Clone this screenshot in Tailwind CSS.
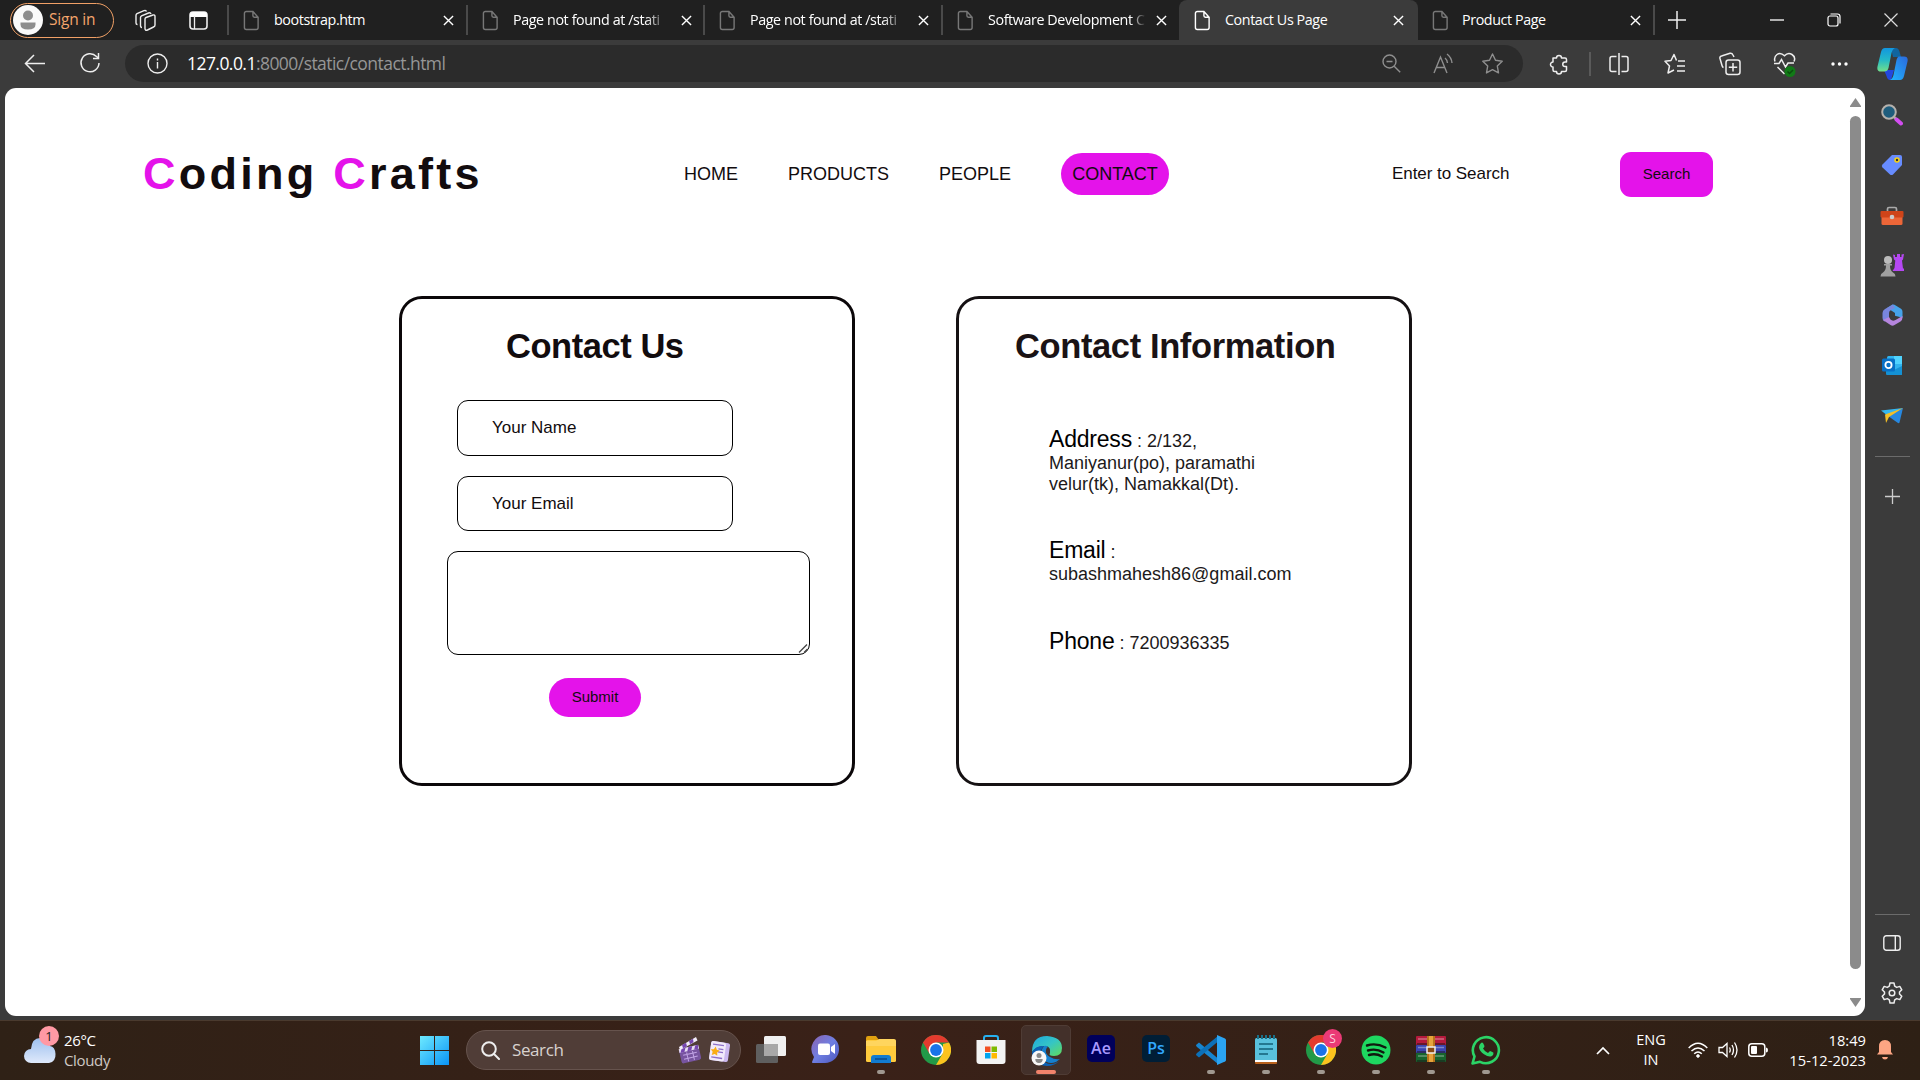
<!DOCTYPE html>
<html lang="en">
<head>
<meta charset="utf-8">
<title>Contact Us Page</title>
<script src="https://cdn.jsdelivr.net/npm/@tailwindcss/browser@4"></script>
</head>
<body class="w-[1920px] h-[1080px] overflow-hidden bg-[#3b3b3b] font-['Open_Sans',sans-serif] text-white flex flex-col">
<svg class="hidden">
  <symbol id="doc" viewBox="0 0 18 22"><path d="M3.5 1.5h7l5.5 6v11a2 2 0 0 1-2 2H3.500a2 2 0 0 1-2-2v-15a2 2 0 0 1 2-2zM10.500 1.500v4.500a1.500 1.500 0 0 0 1.500 1.500h4" fill="none" stroke="currentColor" stroke-width="1.500"/></symbol>
  <symbol id="x" viewBox="0 0 12 12"><path d="M1 1l10 10M11 1L1 11" stroke="currentColor" stroke-width="1.500" fill="none"/></symbol>
  <symbol id="chrome" viewBox="0 0 30 30"><circle cx="15" cy="15" r="15" fill="#229a48"/><path d="M28 7.500A15 15 0 0 1 15 30l6.500-11.200L22 9z" fill="#fcc31e"/><path d="M15 7.500h13A15 15 0 0 0 2 7.500l6.500 11.300z" fill="#e33b2e"/><circle cx="15" cy="15" r="7.500" fill="#fff"/><circle cx="15" cy="15" r="5.900" fill="#1a73e8"/></symbol>
</svg>

<!-- tab strip -->
<header class="h-10 shrink-0 bg-[#202020] flex items-center text-[14.300px] tracking-[-0.4px]">
  <div class="ml-[10px] w-[104px] h-[35px] rounded-full border-[1.5px] border-[#f0a066] flex items-center text-[#f4a56c] shrink-0">
    <svg class="ml-[2px] size-[30px]" viewBox="0 0 30 30"><circle cx="15" cy="15" r="15" fill="#fafafa"/><circle cx="15" cy="10.500" r="5" fill="#8d8d8d"/><path d="M7.500 17.500h15v2q0 5-7.500 5t-7.500-5z" fill="#8d8d8d"/></svg>
    <span class="ml-[6px] text-[15.500px] tracking-[-0.2px] whitespace-nowrap">Sign in</span>
  </div>
  <svg class="ml-[20px] size-[23px] shrink-0" viewBox="0 0 23 23" fill="none" stroke="#eee" stroke-width="1.400"><path d="M12 8.500l7-2.500q2-.5 2 1.500v8.500q0 1.500-1.500 2l-6 3q-2.500.8-2.500-1.500V10q0-1 1-1.500z"/><path d="M8 18.500q-1.500 0-1.500-2V8.500q0-1.200 1-1.700l7-2.800q2-.6 2.500 1"/><path d="M3.500 15.500Q2 15.500 2 14V6.500Q2 5.300 3 4.700l7-3Q12 1 12.500 2.500"/></svg>
  <svg class="ml-[32px] size-[19px] shrink-0" viewBox="0 0 19 19"><rect x="1" y="1" width="17" height="17" rx="3" fill="none" stroke="#eee" stroke-width="1.600"/><path d="M1 6V4q0-3 3-3h11q3 0 3 3v2z" fill="#fff"/><path d="M5.500 5v13" stroke="#eee" stroke-width="1.300"/></svg>
  <div class="ml-[19px] w-[2px] h-[30px] bg-[#4a4a4a] shrink-0"></div>
  <div class="flex h-10 items-center">
    <div class="w-[239px] h-10 flex items-center pl-[14px] shrink-0">
      <svg class="w-[17px] h-[21px] text-[#777] shrink-0"><use href="#doc"/></svg><span class="ml-[14px] w-[158px] whitespace-nowrap shrink-0">bootstrap.htm</span><svg class="ml-[11px] size-[11px] shrink-0"><use href="#x"/></svg><div class="ml-auto w-[2px] h-[30px] bg-[#4a4a4a]"></div>
    </div>
    <div class="w-[237px] h-10 flex items-center pl-[14px] shrink-0">
      <svg class="w-[17px] h-[21px] text-[#777] shrink-0"><use href="#doc"/></svg><span class="ml-[14px] w-[156px] whitespace-nowrap shrink-0 mask-r-from-85%">Page not found at /stati</span><svg class="ml-[12px] size-[11px] shrink-0"><use href="#x"/></svg><div class="ml-auto w-[2px] h-[30px] bg-[#4a4a4a]"></div>
    </div>
    <div class="w-[238px] h-10 flex items-center pl-[14px] shrink-0">
      <svg class="w-[17px] h-[21px] text-[#777] shrink-0"><use href="#doc"/></svg><span class="ml-[14px] w-[156px] whitespace-nowrap shrink-0 mask-r-from-85%">Page not found at /stati</span><svg class="ml-[12px] size-[11px] shrink-0"><use href="#x"/></svg><div class="ml-auto w-[2px] h-[30px] bg-[#4a4a4a]"></div>
    </div>
    <div class="w-[236px] h-10 flex items-center pl-[14px] shrink-0">
      <svg class="w-[17px] h-[21px] text-[#777] shrink-0"><use href="#doc"/></svg><span class="ml-[14px] w-[158px] whitespace-nowrap shrink-0 mask-r-from-90%">Software Development C</span><svg class="ml-[10px] size-[11px] shrink-0"><use href="#x"/></svg>
    </div>
    <div class="w-[239px] h-10 flex items-center pl-[15px] shrink-0 bg-[#3b3b3b] rounded-t-lg">
      <svg class="w-[17px] h-[21px] text-white shrink-0"><use href="#doc"/></svg><span class="ml-[14px] w-[158px] whitespace-nowrap shrink-0">Contact Us Page</span><svg class="ml-[10px] size-[11px] shrink-0"><use href="#x"/></svg>
    </div>
    <div class="w-[237px] h-10 flex items-center pl-[14px] shrink-0">
      <svg class="w-[17px] h-[21px] text-[#777] shrink-0"><use href="#doc"/></svg><span class="ml-[13px] w-[158px] whitespace-nowrap shrink-0">Product Page</span><svg class="ml-[10px] size-[11px] shrink-0"><use href="#x"/></svg><div class="ml-auto w-[2px] h-[30px] bg-[#4a4a4a]"></div>
    </div>
  </div>
  <svg class="ml-[13px] size-[18px] shrink-0" viewBox="0 0 18 18"><path d="M9 0v18M0 9h18" stroke="#eee" stroke-width="1.500"/></svg>
  <div class="ml-auto pr-[22px] flex items-center gap-[43px] shrink-0">
    <svg class="size-[14px]" viewBox="0 0 14 14"><path d="M0 7h14" stroke="#fff" stroke-width="1.300"/></svg>
    <svg class="size-[14px]" viewBox="0 0 14 14" fill="none" stroke="#fff" stroke-width="1.200"><rect x="1" y="3" width="10" height="10" rx="2"/><path d="M3.500 1h7q2.500 0 2.500 2.500v7"/></svg>
    <svg class="size-[14px]" viewBox="0 0 14 14"><path d="M.5.5l13 13M13.500.5l-13 13" stroke="#ddd" stroke-width="1.200"/></svg>
  </div>
</header>

<!-- toolbar -->
<div class="h-12 shrink-0 flex items-center">
  <svg class="ml-[24px] mt-[-2px] w-[21px] h-[19px]" viewBox="0 0 21 19"><path d="M10 1L1.500 9.500 10 18M1.500 9.500H21" fill="none" stroke="#eee" stroke-width="1.500"/></svg>
  <svg class="ml-[34px] mt-[-2px] size-[22px]" viewBox="0 0 22 22" fill="none" stroke="#eee" stroke-width="1.500"><path d="M20 11a9 9 0 1 1-2.500-6.500L19.500 6M19.500 1v5.500h-5.500"/></svg>
  <div class="ml-[24px] mt-[-1px] w-[1398px] h-[37px] rounded-full bg-[#2b2b2b] flex items-center pl-[22px] pr-[20px]">
    <svg class="size-[21px]" viewBox="0 0 21 21" fill="none" stroke="#eee" stroke-width="1.400"><circle cx="10.500" cy="10.500" r="9.500"/><path d="M10.500 9v6.500M10.500 5.500v2"/></svg>
    <span class="ml-[19px] text-[17.500px] tracking-[-0.550px] text-[#969696] whitespace-nowrap"><span class="text-white">127.0.0.1</span>:8000/static/contact.html</span>
    <div class="ml-auto flex items-center text-[#8f8f8f]">
      <svg class="size-[19px]" viewBox="0 0 19 19" fill="none" stroke="currentColor" stroke-width="1.400"><circle cx="7.500" cy="7.500" r="6.500"/><path d="M4.500 7.500h6M12.200 12.200l6 6"/></svg>
      <svg class="ml-[32px] w-[20px] h-[21px]" viewBox="0 0 20 21" fill="none" stroke="currentColor" stroke-width="1.400"><path d="M1 20L7.500 4 14 20M3.500 14.500h8M12 5q2 1.500 2.500 5M14 1q4.500 3.500 5 9"/></svg>
      <svg class="ml-[29px] w-[21px] h-[21px]" viewBox="0 0 21 21" fill="none" stroke="currentColor" stroke-width="1.400" stroke-linejoin="round"><path d="M10.500 1l3 6.300 6.700 1-4.900 4.700 1.200 6.900-6-3.300-6 3.300 1.200-6.900L.8 8.300l6.700-1z"/></svg>
    </div>
  </div>
  <div class="flex items-center mt-[-1px] shrink-0">
    <svg class="ml-[25px] size-[22px]" viewBox="0 0 22 22" fill="none" stroke="#eee" stroke-width="1.500" stroke-linejoin="round"><path d="M5 5h3.500a2.500 2.500 0 1 1 5 0H17q1.500 0 1.500 1.500V9h-1.500a2.200 2.200 0 1 0 0 4.500h1.500v3.500q0 1.500-1.500 1.500h-3.500a2.500 2.500 0 1 1-5 0H6.500Q5 18.500 5 17v-3a2.500 2.500 0 1 1 0-5z"/></svg>
    <div class="ml-[19px] w-[2px] h-[24px] bg-[#5a5a5a]"></div>
    <svg class="ml-[18px] w-[20px] h-[22px]" viewBox="0 0 20 22" fill="none" stroke="#eee" stroke-width="1.500"><path d="M7.500 3.500H3q-2 0-2 2v11q0 2 2 2h4.500M12.500 3.500H17q2 0 2 2v11q0 2-2 2h-4.500M10 0v22"/></svg>
    <svg class="ml-[35px] w-[21px] h-[22px]" viewBox="0 0 21 22" fill="none" stroke="#eee" stroke-width="1.500" stroke-linejoin="round"><path d="M12.500 7.500L10 1.500 7 7.500l-6 .8 4.500 4.700-1.500 7 6-3M14 8h7M13 13h8M13 18h8"/></svg>
    <svg class="ml-[34px] w-[22px] h-[24px]" viewBox="0 0 22 24" fill="none" stroke="#eee" stroke-width="1.500"><rect x="7" y="8" width="14" height="14.500" rx="2.500"/><path d="M14 11v8.500M9.800 15.200h8.400M4.500 15.500q-1-.3-1.500-2L1 6.500Q.5 4.500 2.500 4L11 1.200Q13 .8 14 3l1 2"/></svg>
    <svg class="ml-[32px] mt-[2px] w-[23px] h-[26px]" viewBox="0 0 23 26" fill="none" stroke="#eee" stroke-width="1.500"><path d="M2 9.500Q.5 5 4 2.500t7.500 1.300Q15 0 19 2.500t2 7M1 11.500h5l2.500-4 4 7.500 2.500-4h6M4.500 15l7 7"/><circle cx="17" cy="19.500" r="5.500" fill="#117a17" stroke="none"/><path d="M14.500 19.500l2 2 3.500-3.500" stroke="#0a4d0e"/></svg>
    <svg class="ml-[35px] w-[17px] h-[4px]" viewBox="0 0 17 4" fill="#fff"><circle cx="2" cy="2" r="1.700"/><circle cx="8.500" cy="2" r="1.700"/><circle cx="15" cy="2" r="1.700"/></svg>
    <svg class="ml-[29px] w-[31px] h-[32px]" viewBox="0 0 31 32"><defs><linearGradient id="cp1" x1="0" y1="0" x2="0" y2="1"><stop offset="0" stop-color="#1296df"/><stop offset=".5" stop-color="#23b8c8"/><stop offset="1" stop-color="#72e08a"/></linearGradient><linearGradient id="cp2" x1="0" y1="1" x2="1" y2="0"><stop offset="0" stop-color="#20b7ff"/><stop offset="1" stop-color="#2b68dc"/></linearGradient></defs><path d="M14 0h5q2.500 0 3.500 3.500L24 9h-8z" fill="#10659f"/><path d="M7 22h10l-3 10h-1q-2.500 0-3.500-4z" fill="#2348df"/><path d="M8 0h10q-2.500 1-3.500 5l-3 15q-1 3.500-4 3.500H4q-4.500 0-3.500-5L4 4Q5 0 8 0z" fill="url(#cp1)"/><path d="M22 8.500h5q4.500 0 3.500 5L27 28q-1 4-4 4H13q2.500-1 3.500-5l3-15q1-3.500 2.500-3.500z" fill="url(#cp2)"/></svg>
  </div>
</div>

<div class="h-[932px] shrink-0 flex">
  <!-- page viewport -->
  <main class="ml-[5px] w-[1860px] h-[928px] rounded-[11px] bg-white flex font-['Liberation_Sans',Arial,sans-serif] text-[#120c0e]">
    <div class="w-[1845px] shrink-0">
      <nav class="mt-[61px] h-[50px] flex items-center">
        <h1 class="ml-[138px] w-[541px] shrink-0 text-[45px] leading-[50px] font-bold tracking-[3.250px] whitespace-nowrap"><span class="text-[#e413ea]">C</span>oding <span class="text-[#e413ea]">C</span>rafts</h1>
        <div class="flex items-center text-[18px] shrink-0">
          <a class="w-[104px]">HOME</a><a class="w-[151px]">PRODUCTS</a><a class="w-[122px]">PEOPLE</a>
          <a class="w-[108px] h-[42px] rounded-[21px] bg-[#e413ea] flex items-center justify-center">CONTACT</a>
        </div>
        <span class="ml-[223px] w-[228px] shrink-0 text-[17px] tracking-[-0.050px]">Enter to Search</span>
        <button class="w-[93px] h-[45px] shrink-0 rounded-[11px] bg-[#e413ea] text-[15px]">Search</button>
      </nav>
      <div class="mt-[97px] ml-[394px] flex gap-[101px]">
        <form class="w-[456px] h-[490px] rounded-[23px] border-3 border-[#0b0709] flex flex-col items-start">
          <h2 class="mt-[27px] ml-[104px] text-[34.500px] leading-[40px] font-bold tracking-[-0.450px] whitespace-nowrap">Contact Us</h2>
          <div class="mt-[34px] ml-[55px] w-[276px] h-[56px] rounded-[11px] border border-black flex items-center pl-[34px] text-[17px]">Your Name</div>
          <div class="mt-[20px] ml-[55px] w-[276px] h-[55px] rounded-[11px] border border-black flex items-center pl-[34px] text-[17px]">Your Email</div>
          <div class="mt-[20px] ml-[45px] w-[363px] h-[104px] rounded-[11px] border border-black flex items-end justify-end">
            <svg class="size-[11px]" viewBox="0 0 11 11"><path d="M1 9.500L9 1.500M6 9.500L9.500 6" stroke="#444" stroke-width="1.300"/></svg>
          </div>
          <button class="mt-[23px] ml-[147px] w-[92px] h-[39px] rounded-full bg-[#e413ea] text-[15px]">Submit</button>
        </form>
        <section class="w-[456px] h-[490px] rounded-[23px] border-3 border-[#151113]">
          <h2 class="mt-[27px] ml-[56px] text-[34.500px] leading-[40px] font-bold tracking-[-0.380px] whitespace-nowrap text-[#1a1315]">Contact Information</h2>
          <div class="ml-[90px] mt-[59px] w-[250px] text-[18px] leading-[21px] text-[#1c191a]">
            <p class="whitespace-nowrap"><span class="text-[23px] leading-[28px] tracking-[-0.2px] text-black">Address</span> : 2/132,<br>Maniyanur(po), paramathi<br>velur(tk), Namakkal(Dt).</p>
            <p class="mt-[41px]"><span class="text-[23px] leading-[28px] tracking-[-0.2px] text-black">Email</span> :<br>subashmahesh86@gmail.com</p>
            <p class="mt-[42px]"><span class="text-[23px] leading-[28px] tracking-[-0.2px] text-black">Phone</span> : 7200936335</p>
          </div>
        </section>
      </div>
    </div>
    <div class="w-[11px] pt-[10px] flex flex-col items-center shrink-0">
      <svg class="w-[11px] h-[9px]" viewBox="0 0 11 9"><path d="M5.500 0L11 8v1H0V8z" fill="#8b8b8b"/></svg>
      <div class="mt-[9px] w-[11px] h-[853px] rounded-full bg-[#8b8b8b]"></div>
      <svg class="mt-[29px] w-[11px] h-[9px]" viewBox="0 0 11 9"><path d="M5.500 9L11 1V0H0v1z" fill="#8b8b8b"/></svg>
    </div>
  </main>

  <!-- sidebar -->
  <aside class="w-[54px] flex flex-col items-center">
    <svg class="mt-[16px] size-[22px]" viewBox="0 0 22 22"><path d="M13 13l3 3" stroke="#aaa" stroke-width="2.500"/><path d="M15.500 15.500l4.500 4" stroke="#d24df0" stroke-width="4" stroke-linecap="round"/><circle cx="8" cy="8" r="6.800" fill="#1f5d7d" stroke="#b5b1ad" stroke-width="2"/></svg>
    <svg class="mt-[28px] size-[22px]" viewBox="0 0 22 22"><path d="M11 1h8q2 0 2 2v8L12 20.500q-1.500 1-3 0l-7.500-7q-1.500-1.500 0-3z" fill="#678cff"/><circle cx="16" cy="6" r="2" fill="#333" stroke="#f7d116" stroke-width="1.600"/></svg>
    <svg class="mt-[30px] w-[24px] h-[20px]" viewBox="0 0 24 20"><path d="M7.500 5V3q0-1.500 1.500-1.500h6q1.500 0 1.500 1.500v2" fill="none" stroke="#aaa" stroke-width="1.700"/><rect x="1.500" y="8" width="21" height="11" rx="1.500" fill="#ec6638"/><rect x=".5" y="5" width="23" height="6.500" rx="1" fill="#cf4419"/><circle cx="12" cy="11" r="2.300" fill="#ccc"/></svg>
    <svg class="mt-[27px] w-[24px] h-[24px]" viewBox="0 0 24 24"><path d="M13 1.500l2 .5v2h2V1h3v3h1.500V1.500L24 1l-1 5.500-1 1 1 8H24v2.500H12.500L14.500 15l.8-7.500-1.300-1z" fill="#b548f2"/><circle cx="8" cy="7" r="4" fill="#bbb"/><path d="M4 11h8v1.500h-2q0 5 3 7 2.500 1 2.500 4H.5q0-3 2.500-4 3-2 3-7H4z" fill="#a0a0a0"/></svg>
    <svg class="mt-[27px] size-[23px]" viewBox="0 0 23 23"><path d="M11.500.5q1-.3 2 .3l6.500 4q1.500 1 1.500 3v6l-7.500-2L14 9l-3-2-5-3z" fill="#46a3ea"/><path d="M12 .5L4 5Q1.500 6.500 1.500 9v5q0 2.500 2 3.500l4.500-2.500V9q0-2 2-3l4-2z" fill="#7886dd"/><path d="M2 16l7.500 5q2 1.300 4 0l6-3.500q2-1.300 2-4V12l-7 4q-3 1.500-5-.5L8 13z" fill="#b585dd"/></svg>
    <svg class="mt-[28px] w-[21px] h-[21px]" viewBox="0 0 21 21"><rect x="5" y="1" width="15" height="19" rx="1.500" fill="#32b5ef"/><path d="M12 1h8v8h-8z" fill="#50d4ff"/><path d="M4 13l8 2 8-4v8q0 1-1 1H5q-1 0-1-1z" fill="#1491d4"/><rect x="0" y="3.500" width="13" height="13" rx="1.500" fill="#0870c5"/><circle cx="6.500" cy="10" r="3.100" fill="none" stroke="#fff" stroke-width="1.800"/></svg>
    <svg class="mt-[31px] w-[22px] h-[17px]" viewBox="0 0 22 17"><path d="M0 3.500L22 1 7 9z" fill="#35b6ef"/><path d="M22 1L7 9l10 7q1 .5 1.500-.5z" fill="#2788e0"/><path d="M22 1L4 7.500 5 16l3-6z" fill="#f4bf26"/></svg>
    <div class="mt-[32px] w-[35px] h-px bg-[#6b6b6b]"></div>
    <svg class="mt-[32px] size-[15px]" viewBox="0 0 15 15"><path d="M7.500 0v15M0 7.500h15" stroke="#ccc" stroke-width="1.300"/></svg>
    <div class="mt-[410px] w-[35px] h-px bg-[#6b6b6b]"></div>
    <svg class="mt-[20px] w-[18px] h-[16px]" viewBox="0 0 18 16" fill="none" stroke="#eee" stroke-width="1.400"><rect x=".8" y=".8" width="16.400" height="14.400" rx="2.500"/><path d="M12.300 1v14"/></svg>
    <svg class="mt-[31px] size-[22px]" viewBox="0 0 22 22" fill="none" stroke="#eee" stroke-width="1.500" stroke-linejoin="round"><path d="M9 1h4l.7 3.200 2 1.200 3.100-1 2 3.400L18.500 10v2l2.300 2.200-2 3.400-3.100-1-2 1.200L13 21H9l-.7-3.200-2-1.200-3.100 1-2-3.400L3.500 12v-2L1.200 7.800l2-3.400 3.100 1 2-1.200z"/><circle cx="11" cy="11" r="2.800"/></svg>
  </aside>
</div>

<!-- taskbar -->
<footer class="h-[60px] shrink-0 border-t border-[#4a3a2e] bg-linear-to-r from-[#2f2116] via-[#3a2118] via-45% to-[#2e2015] flex items-center pb-px">
  <div class="w-[420px] shrink-0 flex items-center">
    <svg class="ml-[24px] mt-[-14px] w-[36px] h-[42px]" viewBox="0 0 36 42"><defs><linearGradient id="cl" x1="0" y1="0" x2="0" y2="1"><stop offset="0" stop-color="#9dc0ee"/><stop offset="1" stop-color="#dfe9fb"/></linearGradient></defs><path d="M7 41a7 7 0 0 1 0-14q1-11 9-11t10 8q5 .5 5.500 8t-6.500 9z" fill="url(#cl)"/><circle cx="25" cy="14" r="10" fill="#ff99a4"/><text x="25" y="19" text-anchor="middle" font-size="13" fill="#222">1</text></svg>
    <div class="ml-[4px] text-[15px] leading-[20px] tracking-[-0.350px]"><div>26°C</div><div class="text-[#cfc8c4]">Cloudy</div></div>
  </div>
  <svg class="size-[29px] shrink-0" viewBox="0 0 29 29"><defs><linearGradient id="win" x1="0" y1="0" x2="1" y2="1"><stop offset="0" stop-color="#6eeaff"/><stop offset="1" stop-color="#0a94f6"/></linearGradient></defs><path d="M0 0h14v14H0zM15 0h14v14H15zM0 15h14v14H0zM15 15h14v14H15z" fill="url(#win)"/></svg>
  <div class="ml-[17px] w-[275px] h-[40px] shrink-0 rounded-full bg-[#503d37] border border-[#66534d] flex items-center pl-[14px]">
    <svg class="size-[19px]" viewBox="0 0 19 19" fill="none" stroke="#eee" stroke-width="2"><circle cx="8" cy="8" r="6.800"/><path d="M13 13l5 5" stroke-linecap="round"/></svg>
    <span class="ml-[12px] text-[17px] tracking-[-0.400px] text-[#d8d2cf]">Search</span>
    <svg class="ml-auto mr-[9px] w-[54px] h-[28px]" viewBox="0 0 54 28"><g transform="rotate(-13 12 18)"><rect x="3" y="11" width="20" height="15" rx="2" fill="#77549f"/><path d="M3 11h20v4H3z" fill="#e7def3"/><path d="M6 11l-2 4h4l2-4zM13 11l-2 4h4l2-4zM20 11l-2 4h4l1-4z" fill="#7646b0"/><path d="M6 18h14M6 22h14M10 16v9M16 16v9" stroke="#c1a4e5"/></g><path d="M2 11L19 1l1.500 3.500L3 14z" fill="#f2ecfa"/><path d="M5 9l4-2.300 1 3.500-4 2zM12 5l4-2.300.5 3.600-3.500 2z" fill="#7646b0"/><g transform="rotate(8 42 16)"><rect x="33" y="6" width="19" height="19" rx="2" fill="#cbb8ef"/><rect x="33" y="6" width="15" height="19" rx="2" fill="#f1eafa"/><path d="M35 9h11M41 13h5M41 16h5M35 22h11" stroke="#8d6fc9" stroke-width="1.300"/><path d="M38 11l1.500 3 3 .4-2.200 2.300.5 3.300-2.800-1.500-2.800 1.500.5-3.300-2.200-2.300 3-.4z" fill="#faad14"/></g></svg>
  </div>
  <div class="ml-[5px] flex items-center gap-[5px] shrink-0">
    <div class="size-[50px] flex flex-col items-center pt-[10px]"><svg class="size-[30px]" viewBox="0 0 30 30"><rect x="8" y="1" width="22" height="20" rx="1.500" fill="#f0f0f0"/><rect x="0" y="9" width="22" height="19" rx="1.500" fill="#5f5f5f"/><path d="M8 9h14v12H8z" fill="#a8a8a8"/></svg></div>
    <div class="size-[50px] flex flex-col items-center pt-[10px]"><svg class="size-[30px]" viewBox="0 0 30 30"><defs><linearGradient id="ch" x1="0" y1="0" x2="1" y2="1"><stop offset="0" stop-color="#8b63b0"/><stop offset=".5" stop-color="#6f7fe2"/><stop offset="1" stop-color="#4b55bb"/></linearGradient></defs><path d="M15 0a14 14 0 1 1-2 28H2q-1.500 0-.8-1.500L3 22A14 14 0 0 1 15 0z" fill="url(#ch)"/><rect x="7" y="8.500" width="12" height="11.500" rx="2" fill="#fff"/><path d="M20 12l4-3v10l-4-3z" fill="#fff"/></svg></div>
    <div class="size-[50px] flex flex-col items-center pt-[10px]"><svg class="size-[30px]" viewBox="0 0 30 30"><path d="M0 3q0-2 2-2h8l3 4h-1v5H0z" fill="#e0a010"/><rect x="0" y="5" width="30" height="22" rx="1.500" fill="#ffcb3d"/><path d="M0 6q0 0 2 0h8l3-2h15q2 0 2 2v5H0z" fill="#ffd55e"/><path d="M5 28v-5q0-3 3-3h14q3 0 3 3v5z" fill="#127bd0"/><path d="M9 24h12" stroke="#0a4a8c" stroke-width="1.500"/></svg><i class="mt-[5px] w-[8px] h-[4px] rounded-full bg-[#a09890]"></i></div>
    <div class="size-[50px] flex flex-col items-center pt-[10px]"><svg class="size-[30px]"><use href="#chrome"/></svg></div>
    <div class="size-[50px] flex flex-col items-center pt-[10px]"><svg class="size-[30px]" viewBox="0 0 30 30"><path d="M8 7V3q0-2 2-2h10q2 0 2 2v4" fill="none" stroke="#27b1ef" stroke-width="2"/><path d="M.5 5h29v21q0 3-3 3h-23q-3 0-3-3z" fill="#f3f3f3"/><path d="M9 11.500h5.500V17H9z" fill="#f25022"/><path d="M15.500 11.500H21V17h-5.500z" fill="#7fba00"/><path d="M9 18h5.500v5.500H9z" fill="#00a4ef"/><path d="M15.500 18H21v5.500h-5.500z" fill="#ffb900"/></svg></div>
    <div class="size-[50px] flex flex-col items-center pt-[9px] rounded-[5px] bg-[#43302a] border border-[#4f3c35]"><svg class="size-[31px]" viewBox="0 0 31 31"><defs><linearGradient id="ed" x1="0" y1="0" x2="1" y2="1"><stop offset="0" stop-color="#1da7df"/><stop offset=".5" stop-color="#35c5c5"/><stop offset="1" stop-color="#62dc5a"/></linearGradient></defs><path d="M1 17Q1 1 16 1q15 1 15 12 0 8-8 8-6 0-4-3 1-6-4-7Q6 10 1 17z" fill="url(#ed)"/><path d="M1 17q4-7 12-6-4 4-3 9 2 9 10 9 5 0 9-4-5 6-13 6Q1 30 1 17z" fill="#0b61b5"/><path d="M13 11q-5 6-1 13 5 6 13 3l4-3q-5 1-10-2-5-3-4-7 .5-3 2-3-2-2-4-1z" fill="#1580cf"/><circle cx="8" cy="23" r="7.500" fill="#f7f7f7"/><circle cx="8" cy="20.500" r="2.500" fill="#888"/><path d="M4.300 24h7.400q0 4-3.700 4t-3.700-4z" fill="#888"/></svg><i class="mt-[4px] w-[20px] h-[4px] rounded-full bg-[#f2836b]"></i></div>
    <div class="size-[50px] flex flex-col items-center pt-[10px]"><div class="w-[28px] h-[27px] rounded-[5px] bg-[#00005b] text-[#a99bff] text-[16px] font-semibold leading-[26px] text-center">Ae</div></div>
    <div class="size-[50px] flex flex-col items-center pt-[10px]"><div class="w-[28px] h-[27px] rounded-[5px] bg-[#001e36] text-[#31a8ff] text-[16px] font-semibold leading-[26px] text-center">Ps</div></div>
    <div class="size-[50px] flex flex-col items-center pt-[10px]"><svg class="size-[30px]" viewBox="0 0 30 30"><path d="M0 10l3-2.500 19 16V29L1 12q-1-1-1-2z" fill="#1785cf"/><path d="M0 20l3 2.500L22 6.500V1L1 18q-1 1-1 2z" fill="#0c70b8"/><path d="M21 0l8 3.500q1 .5 1 1.500v20q0 1-1 1.500L21 30z" fill="#2ba4f2"/></svg><i class="mt-[5px] w-[8px] h-[4px] rounded-full bg-[#a09890]"></i></div>
    <div class="size-[50px] flex flex-col items-center pt-[10px]"><svg class="size-[30px]" viewBox="0 0 30 30"><rect x="4" y="25" width="22" height="4" rx="1" fill="#b9611c"/><rect x="4" y="3" width="22" height="24" rx="1.500" fill="#59c1dc"/><path d="M4 25h22v2H4z" fill="#fff"/><path d="M7 0v4M11 0v4M15 0v4M19 0v4M23 0v4" stroke="#1a7088" stroke-width="2"/><path d="M8 9h14M8 14h14M8 19h9" stroke="#136077" stroke-width="1.600"/></svg><i class="mt-[5px] w-[8px] h-[4px] rounded-full bg-[#a09890]"></i></div>
    <div class="size-[50px] flex flex-col items-center pt-[10px] relative"><svg class="size-[30px]"><use href="#chrome"/></svg><i class="mt-[5px] w-[8px] h-[4px] rounded-full bg-[#a09890]"></i><span class="absolute left-[27px] top-[4px] size-[19px] rounded-full bg-[#ea3a76] text-[12px] leading-[19px] text-center text-[#ffd3df]">S</span></div>
    <div class="size-[50px] flex flex-col items-center pt-[10px]"><svg class="size-[30px]" viewBox="0 0 30 30"><circle cx="15" cy="15" r="14.500" fill="#1ed760"/><path d="M6 10.500q9-3 18.500 2M7 15.500q8-2.500 15.500 2M8 20q7-2 13 1.500" fill="none" stroke="#10190f" stroke-width="2.400" stroke-linecap="round"/></svg><i class="mt-[5px] w-[8px] h-[4px] rounded-full bg-[#a09890]"></i></div>
    <div class="size-[50px] flex flex-col items-center pt-[10px]"><svg class="size-[30px]" viewBox="0 0 30 30"><rect x="0" y="1" width="30" height="9" rx="1" fill="#b51a3c"/><rect x="0" y="10" width="30" height="8" rx="1" fill="#3b45b0"/><rect x="0" y="18" width="30" height="9" rx="1" fill="#17642e"/><path d="M1 9h28M1 17h28M1 26h28" stroke="#1c1418" stroke-width="1"/><path d="M2 4h26M2 12.500h26M2 21h26" stroke="#fff" stroke-opacity=".35" stroke-width="1.500"/><path d="M11 1h8v26h-8z" fill="#b9731b"/><path d="M13 1h4v26h-4z" fill="#e6a43c"/><rect x="11" y="12" width="8" height="6" fill="#8a4a12" stroke="#eee" stroke-width="1.500"/></svg><i class="mt-[5px] w-[8px] h-[4px] rounded-full bg-[#a09890]"></i></div>
    <div class="size-[50px] flex flex-col items-center pt-[10px]"><svg class="size-[30px]" viewBox="0 0 30 30"><path d="M1.500 28.500l2-7A13 13 0 1 1 9 26.800z" fill="none" stroke="#2bd366" stroke-width="2.600" stroke-linejoin="round"/><path d="M10 8q1-1 2 0l1.500 3q0 1-1.500 2.500 2 3.500 5 4.500l2-2q2 .5 3.500 1.700.3 2.300-2 3.500-3 1-7.500-2t-5-7q0-2.500 2-4.200z" fill="#2bd366"/></svg><i class="mt-[5px] w-[8px] h-[4px] rounded-full bg-[#a09890]"></i></div>
  </div>
  <div class="ml-auto pr-[27px] flex items-center shrink-0">
    <svg class="w-[14px] h-[9px]" viewBox="0 0 14 9"><path d="M1 8l6-6 6 6" fill="none" stroke="#fff" stroke-width="1.700"/></svg>
    <div class="ml-[25px] w-[32px] text-[14.500px] leading-[20px] text-center whitespace-nowrap">ENG<br>IN</div>
    <svg class="ml-[21px] w-[20px] h-[16px]" viewBox="0 0 20 16" fill="none" stroke="#fff" stroke-width="1.500"><path d="M.7 6Q10-3.500 19.300 6M3.500 9q6.500-6 13 0M6.200 11.700q3.800-3.500 7.600 0"/><circle cx="10" cy="14" r="1.300" fill="#fff" stroke-width="1"/></svg>
    <svg class="ml-[10px] w-[20px] h-[18px]" viewBox="0 0 20 18" fill="none" stroke="#fff" stroke-width="1.300"><path d="M1 6.500v5h3.500L9 15.500v-13L4.500 6.500zM11.500 6.500q1.500 2.500 0 5M14 4q3 5 0 10M16.500 1.500q5 7.500 0 15"/></svg>
    <svg class="ml-[10px] w-[20px] h-[14px]" viewBox="0 0 20 14"><rect x=".8" y=".8" width="16" height="12.400" rx="3" fill="none" stroke="#fff" stroke-width="1.500"/><rect x="3" y="3" width="6" height="8" rx="1" fill="#fff"/><path d="M18 4.500q2 0 2 2.500t-2 2.500z" fill="#fff"/></svg>
    <div class="ml-[18px] w-[80px] text-[14.700px] leading-[20px] text-right whitespace-nowrap">18:49<br>15-12-2023</div>
    <svg class="ml-[11px] w-[16px] h-[20px]" viewBox="0 0 16 20" fill="#fda583"><path d="M2 6.500Q2 0 8 0t6 6.500V12l2 2.500H0L2 12zM5 17h6q-.5 2.500-3 2.500T5 17z"/></svg>
  </div>
</footer>
</body>
</html>
